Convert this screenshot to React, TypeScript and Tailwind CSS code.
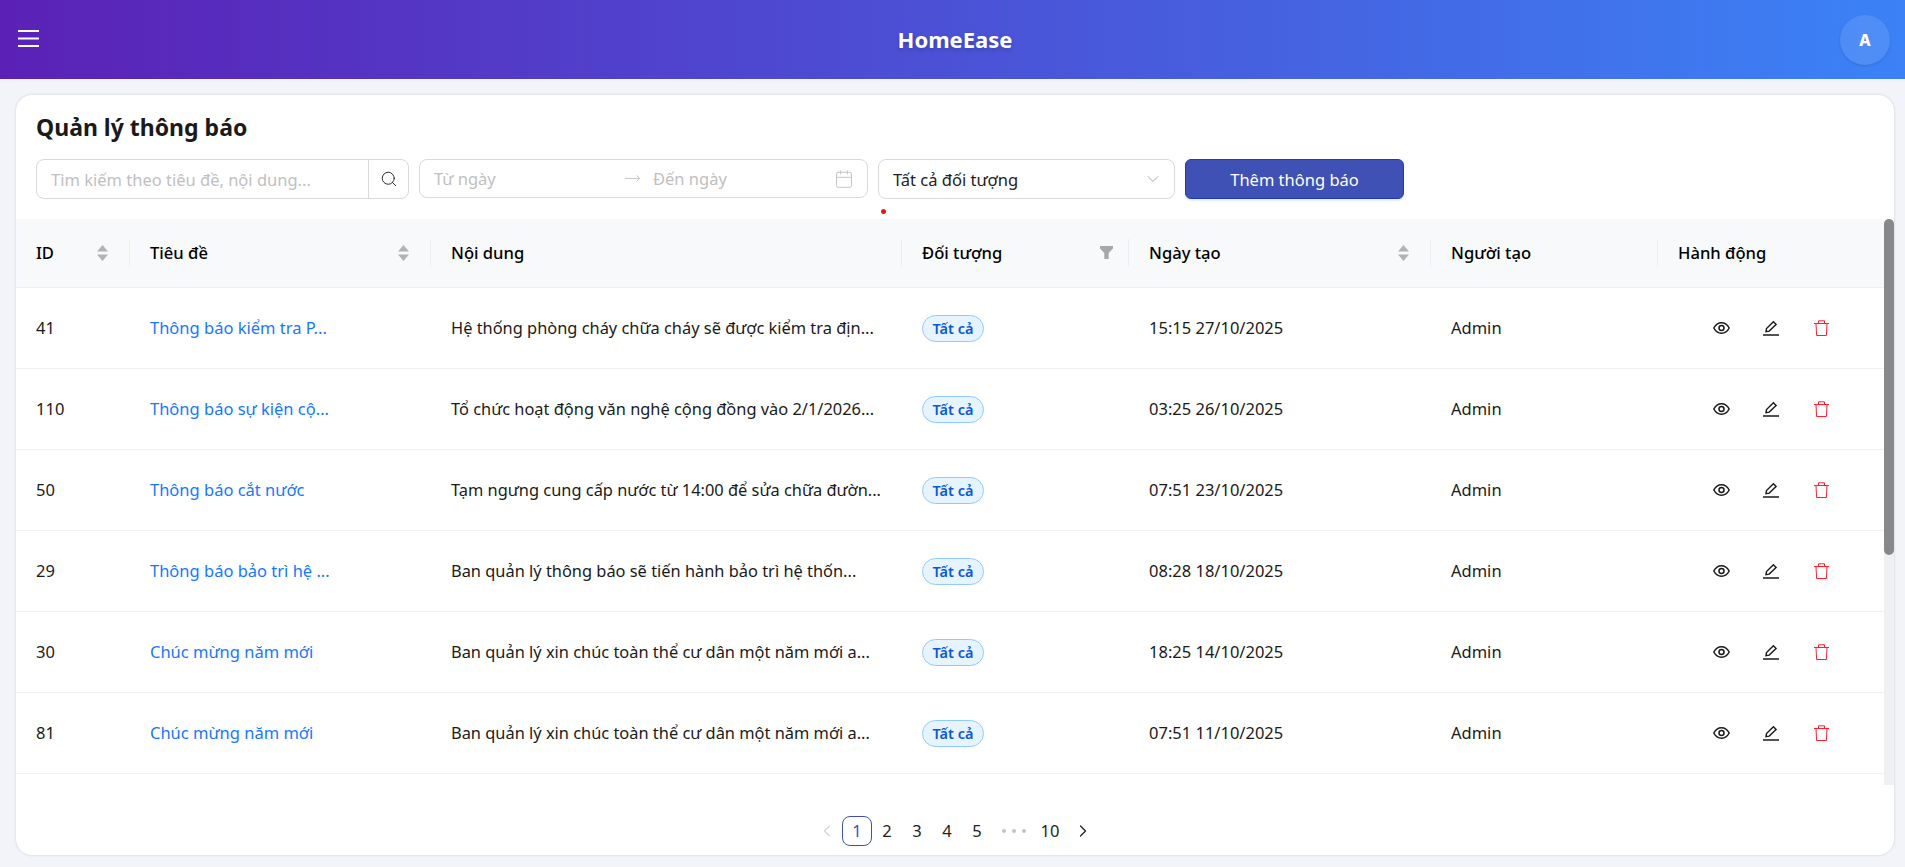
import { Search, ChevronLeft, ChevronRight, Calendar, ChevronDown, MoveRight } from "lucide-react";

const rows = [
  { id: 41, title: "Thông báo kiểm tra P...", content: "Hệ thống phòng cháy chữa cháy sẽ được kiểm tra địn...", date: "15:15 27/10/2025" },
  { id: 110, title: "Thông báo sự kiện cộ...", content: "Tổ chức hoạt động văn nghệ cộng đồng vào 2/1/2026...", date: "03:25 26/10/2025" },
  { id: 50, title: "Thông báo cắt nước", content: "Tạm ngưng cung cấp nước từ 14:00 để sửa chữa đườn...", date: "07:51 23/10/2025" },
  { id: 29, title: "Thông báo bảo trì hệ ...", content: "Ban quản lý thông báo sẽ tiến hành bảo trì hệ thốn...", date: "08:28 18/10/2025" },
  { id: 30, title: "Chúc mừng năm mới", content: "Ban quản lý xin chúc toàn thể cư dân một năm mới a...", date: "18:25 14/10/2025" },
  { id: 81, title: "Chúc mừng năm mới", content: "Ban quản lý xin chúc toàn thể cư dân một năm mới a...", date: "07:51 11/10/2025" },
];

const SortIcon = () => (
  <svg width="11" height="16" viewBox="0 0 11 16" className="mr-[2px] fill-[#b3b3b3]">
    <path d="M5.5 0l5.5 6.5H0z" />
    <path d="M5.5 16L11 9.5H0z" />
  </svg>
);

const Th = ({ label, sort, filter, last }: { label: string; sort?: boolean; filter?: boolean; last?: boolean }) => (
  <th className="relative px-5 text-left text-[16.6px] font-medium text-black">
    <div className="flex items-center justify-between">
      <span className="pt-[2px]">{label}</span>
      {sort && <SortIcon />}
      {filter && (
        <svg width="13" height="13" viewBox="0 0 13 13" className="-mr-[4px] fill-[#a8a8a8]">
          <path d="M0 0h13v2.5L8.7 7v6H4.3V7L0 2.5z" />
        </svg>
      )}
    </div>
    {!last && <span className="absolute right-0 top-1/2 h-[28px] w-px -translate-y-1/2 bg-[#eceef1]" />}
  </th>
);

const EyeIcon = () => (
  <svg width="17" height="12" viewBox="0 0 17 12" fill="none" stroke="#1a1a1a" strokeWidth="1.5">
    <path d="M.8 6C2.6 2.6 5.2.8 8.5.8s5.9 1.8 7.7 5.2c-1.8 3.4-4.4 5.2-7.7 5.2S2.6 9.4.8 6z" />
    <circle cx="8.5" cy="6" r="2.5" />
  </svg>
);

const EditIcon = () => (
  <svg width="16" height="16" viewBox="0 0 16 16" fill="none" stroke="#1a1a1a" strokeWidth="1.4">
    <path d="M3 11.6l.5-3L10.4 1.8l2.7 2.6-6.9 6.7z" />
    <path d="M0 15h16" strokeWidth="1.5" />
  </svg>
);

const TrashIcon = () => (
  <svg width="15" height="16" viewBox="0 0 15 16" fill="none" stroke="#ff1f2d" strokeWidth="1">
    <path d="M0 3.5h15" />
    <path d="M4.5 3.5V.8h6v2.7" />
    <path d="M2 3.5l.6 12h9.8l.6-12" />
  </svg>
);

export default function App() {
  return (
    <div className="flex h-[867px] flex-col overflow-hidden bg-[#f3f4f9] font-['Noto_Sans',sans-serif] text-[16.5px] text-[#111]">
      <header className="flex h-[79px] items-center justify-between bg-linear-to-r/srgb from-[#5b21b6] to-[#3b82f6] pl-[18px] pr-[15px]">
        <div className="w-[52px]">
          <svg width="21" height="17" viewBox="0 0 21 17" className="-mt-[3px] stroke-white" strokeWidth="2">
            <path d="M0 1h21M0 8.5h21M0 16h21" />
          </svg>
        </div>
        <div className="text-[22px] font-bold text-white [text-shadow:0_2px_4px_rgba(0,0,0,0.2)]">HomeEase</div>
        <div className="flex h-[50px] w-[50px] items-center justify-center rounded-full bg-white/10 text-[16px] font-extrabold text-white shadow-sm">A</div>
      </header>

      <main className="pb-3 pl-4 pr-[11px] pt-4">
        <section className="flex h-[760px] flex-col rounded-[16px] bg-white shadow-[0_0_3px_rgba(0,0,0,0.15)]">
          <div className="px-5 pt-[15px]">
            <h1 className="text-[23px] font-bold leading-[34px] text-[#1a1a1a]">Quản lý thông báo</h1>
            <div className="relative mt-[15px] flex h-[40px] items-start gap-[10px]">
              <div className="flex h-[40px] w-[373px] rounded-[8px] border border-[#d9d9d9]">
                <div className="flex flex-1 items-center px-[14px] pt-[2px] text-[#bfbfbf]">Tìm kiếm theo tiêu đề, nội dung...</div>
                <div className="flex w-[40px] items-center justify-center border-l border-[#d9d9d9]">
                  <Search size={18} strokeWidth={1.25} className="text-[#222]" />
                </div>
              </div>
              <div className="flex h-[39px] w-[449px] items-center rounded-[8px] border border-[#d9d9d9] pl-[14px] pr-[13px] text-[#bfbfbf]">
                <span className="w-[190px] pt-[2px]">Từ ngày</span>
                <MoveRight size={17} strokeWidth={1.25} className="text-[#bfbfbf]" />
                <span className="ml-[12px] flex-1 pt-[2px]">Đến ngày</span>
                <Calendar size={20} strokeWidth={1.1} className="text-[#bfbfbf]" />
              </div>
              <div className="flex h-[40px] w-[297px] items-center justify-between rounded-[8px] border border-[#d9d9d9] pl-[14px] pr-[11px] text-[#222]">
                <span className="pt-[2px]">Tất cả đối tượng</span>
                <ChevronDown size={20} strokeWidth={1} className="text-[#999]" />
              </div>
              <button className="h-[40px] w-[219px] rounded-[6px] border border-[#1d39c4] bg-[#3f51b5] pt-[2px] text-white shadow-[0_2px_0_rgba(5,145,255,0.1)]">Thêm thông báo</button>
              <span className="absolute left-[845px] top-[50px] h-[5px] w-[5px] rounded-full bg-[#e8141c]" />
            </div>
          </div>

          <div className="relative mt-[20px] flex h-[566px]">
            <div className="flex-1 overflow-hidden">
              <table className="w-full table-fixed border-collapse">
                <colgroup>
                  <col className="w-[114px]" />
                  <col className="w-[301px]" />
                  <col className="w-[471px]" />
                  <col className="w-[227px]" />
                  <col className="w-[302px]" />
                  <col className="w-[227px]" />
                  <col />
                </colgroup>
                <thead>
                  <tr className="h-[68px] border-b border-[#eeeff1] bg-[#f8f9fb]">
                    <Th label="ID" sort />
                    <Th label="Tiêu đề" sort />
                    <Th label="Nội dung" />
                    <Th label="Đối tượng" filter />
                    <Th label="Ngày tạo" sort />
                    <Th label="Người tạo" />
                    <Th label="Hành động" last />
                  </tr>
                </thead>
                <tbody>
                  {rows.map((r) => (
                    <tr key={r.id} className="h-[81px] border-b border-[#f0f0f0] text-[#1a1a1a]">
                      <td className="px-5 pt-[2px]">{r.id}</td>
                      <td className="whitespace-nowrap px-5 pt-[2px] text-[#1677ff]">{r.title}</td>
                      <td className="whitespace-nowrap px-5 pt-[2px] text-[16.4px]">{r.content}</td>
                      <td className="px-5">
                        <span className="inline-flex h-[27px] w-[62px] translate-y-px items-center justify-center rounded-full border border-[#91caff] bg-[#e6f4ff] text-[14.5px] font-semibold text-[#0958d9]">Tất cả</span>
                      </td>
                      <td className="px-5 pt-[2px]">{r.date}</td>
                      <td className="px-5 pt-[2px]">Admin</td>
                      <td className="px-5">
                        <div className="flex items-center pl-[18px]">
                          <span className="flex w-[50px] justify-center"><EyeIcon /></span>
                          <span className="flex w-[50px] justify-center"><EditIcon /></span>
                          <span className="flex w-[50px] justify-center"><TrashIcon /></span>
                        </div>
                      </td>
                    </tr>
                  ))}
                </tbody>
              </table>
            </div>
            <div className="h-full w-[10px] rounded-t-[5px] bg-[#f0f0f0]">
              <div className="h-[336px] rounded-[5px] bg-[#888]" />
            </div>
          </div>

          <div className="flex flex-1 items-start justify-center pt-[31px] text-[#222]">
            <div className="flex items-center">
              <span className="flex w-[30px] justify-center"><ChevronLeft size={20} strokeWidth={1.25} className="text-[#c4c4c4]" /></span>
              <span className="flex h-[30px] w-[30px] items-center justify-center rounded-[8px] border border-[#3f51b5] text-[#3f51b5]">1</span>
              <span className="flex h-[30px] w-[30px] items-center justify-center">2</span>
              <span className="flex h-[30px] w-[30px] items-center justify-center">3</span>
              <span className="flex h-[30px] w-[30px] items-center justify-center">4</span>
              <span className="flex h-[30px] w-[30px] items-center justify-center">5</span>
              <span className="flex w-[43px] items-center justify-center gap-[6px]">
                <i className="h-[4px] w-[4px] rounded-full bg-[#c4c4c4]" />
                <i className="h-[4px] w-[4px] rounded-full bg-[#c4c4c4]" />
                <i className="h-[4px] w-[4px] rounded-full bg-[#c4c4c4]" />
              </span>
              <span className="flex h-[30px] w-[30px] items-center justify-center">10</span>
              <span className="ml-[3px] flex w-[30px] justify-center"><ChevronRight size={20} strokeWidth={1.5} className="text-[#222]" /></span>
            </div>
          </div>
        </section>
      </main>
    </div>
  );
}
